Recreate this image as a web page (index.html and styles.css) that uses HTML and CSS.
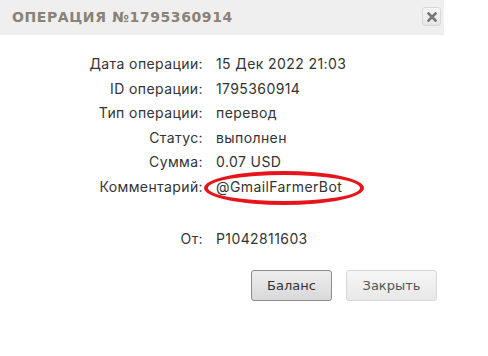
FILE: index.html
```html
<!DOCTYPE html>
<html lang="ru">
<head>
<meta charset="utf-8">
<link rel="stylesheet" href="styles.css">
</head>
<body>
<div class="dialog">
  <div class="header">
    <div class="title">Операция №1795360914</div>
    <button class="close" aria-label="close">
      <svg width="10" height="10" viewBox="0 0 10 10"><path d="M1.5 1.5L8.5 8.5M8.5 1.5L1.5 8.5" stroke="#777" stroke-width="2.6" stroke-linecap="square"/></svg>
    </button>
  </div>
  <div class="content">
    <div class="details">
      <div class="label">Дата операции:</div><div class="value">15 Дек 2022 21:03</div>
      <div class="label">ID операции:</div><div class="value">1795360914</div>
      <div class="label">Тип операции:</div><div class="value">перевод</div>
      <div class="label">Статус:</div><div class="value">выполнен</div>
      <div class="label">Сумма:</div><div class="value">0.07 USD</div>
      <div class="label">Комментарий:</div><div class="value comment">@GmailFarmerBot<span class="ellipse"></span></div>
      <div class="spacer"></div><div class="spacer"></div>
      <div class="label">От:</div><div class="value">P1042811603</div>
    </div>
    <div class="actions">
      <button class="btn primary">Баланс</button>
      <button class="btn">Закрыть</button>
    </div>
  </div>
</div>
</body>
</html>
```
FILE: styles.css
```css
html, body { margin: 0; padding: 0; background: #fff; }
body { width: 488px; height: 356px; overflow: hidden; }
.dialog { width: 444px; }
.header {
  height: 35px;
  background: #efefef;
  display: flex;
  align-items: center;
  justify-content: space-between;
  padding: 0 3px 0 12px;
}
.title {
  font-family: "DejaVu Sans", sans-serif;
  font-weight: bold;
  font-size: 14px;
  letter-spacing: 0.6px;
  text-transform: uppercase;
  color: #8a8178;
  margin-top: -1px;
}
.close {
  width: 19px; height: 19px;
  border: 1px solid #d8d8d8;
  border-radius: 3px;
  background: linear-gradient(#f6f6f6, #e6e6e6);
  padding: 0;
  display: flex; align-items: center; justify-content: center;
  margin-top: -2px;
}
.content { padding-top: 17px; }
.details {
  display: grid;
  grid-template-columns: 203px auto;
  column-gap: 13px;
  font-family: "Inter", sans-serif;
  font-size: 14px;
  letter-spacing: 0.4px;
  line-height: 24.6px;
  color: #333;
}
.label { text-align: right; }
.value { justify-self: start; }
.spacer { height: 27px; }
.comment { position: relative; }
.ellipse {
  position: absolute;
  box-sizing: border-box;
  left: -12px; top: -4px;
  width: 160px; height: 34px;
  border: 4px solid #e8141c;
  border-radius: 50%;
}
.actions {
  display: flex;
  justify-content: flex-end;
  gap: 14px;
  padding-right: 7px;
  margin-top: 19px;
}
.btn {
  font-family: "DejaVu Sans", sans-serif;
  font-size: 13px;
  color: #444;
  height: 31px;
  padding: 0 14px;
  border-radius: 3px;
  border: 1px solid #d6d6d6;
  background: linear-gradient(#f6f6f6, #e8e8e8);
}
.btn.primary {
  border-color: #8c8c8c;
  background: linear-gradient(#eeeeee, #d8d8d8);
  color: #333;
  width: 81px;
}
.btn:not(.primary) { width: 91px; color: #555; }
```
